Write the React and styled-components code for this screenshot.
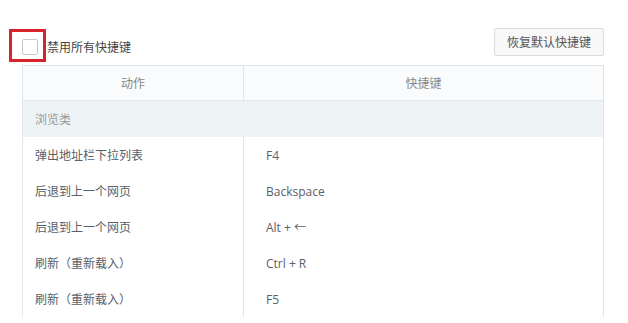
import styled, { createGlobalStyle } from 'styled-components'

const GlobalStyle = createGlobalStyle`
  body {
    margin: 0;
    background: #fff;
    font-family: 'Open Sans', 'Noto Sans CJK SC', sans-serif;
    font-size: 12px;
    color: #555a60;
  }
`

const Page = styled.div`
  padding: 28px 24px 0 22px;
`

const TopBar = styled.div`
  display: flex;
  align-items: center;
  justify-content: space-between;
  height: 28px;
  margin-bottom: 9px;
`

const CheckLabel = styled.label`
  display: flex;
  align-items: center;
  gap: 9px;
  margin-top: 10px;
  color: #444;
`

const Box = styled.span`
  position: relative;
  width: 14px;
  height: 14px;
  border: 1px solid #c9c9c9;
  border-radius: 2px;
  background: #fff;
`

const Highlight = styled.span`
  position: absolute;
  left: -14px;
  top: -11px;
  width: 31px;
  height: 27px;
  border: 3px solid #d8222c;
`

const Button = styled.button`
  height: 28px;
  padding: 0 12px;
  border: 1px solid #dcdcdc;
  border-radius: 2px;
  background: #f8f8f8;
  font-family: inherit;
  font-size: 12px;
  color: #555;
`

const Table = styled.table`
  width: 582px;
  border-collapse: collapse;
  border: 1px solid #e1e6ea;
  border-bottom: none;
`

const HeadCell = styled.th`
  height: 34px;
  padding: 0;
  font-weight: normal;
  color: #888;
  background: #f9fbfc;
  border-bottom: 1px solid #e1e6ea;
  border-right: 1px solid #e1e6ea;
  width: ${p => p.$w || 'auto'};
`

const GroupCell = styled.td`
  height: 36px;
  padding: 0 0 0 12px;
  background: #eef4f6;
  color: #999;
`

const Cell = styled.td`
  height: 36px;
  padding: 0 0 0 ${p => (p.$key ? '22px' : '12px')};
  border-right: 1px solid #e1e6ea;
  color: #5a6068;
`

const rows = [
  ['弹出地址栏下拉列表', 'F4'],
  ['后退到上一个网页', 'Backspace'],
  ['后退到上一个网页', 'Alt + ←'],
  ['刷新（重新载入）', 'Ctrl + R'],
  ['刷新（重新载入）', 'F5'],
]

export default function App() {
  return (
    <Page>
      <GlobalStyle />
      <TopBar>
        <CheckLabel>
          <Box>
            <Highlight />
          </Box>
          禁用所有快捷键
        </CheckLabel>
        <Button>恢复默认快捷键</Button>
      </TopBar>
      <Table>
        <thead>
          <tr>
            <HeadCell $w="220px">动作</HeadCell>
            <HeadCell>快捷键</HeadCell>
          </tr>
        </thead>
        <tbody>
          <tr>
            <GroupCell colSpan={2}>浏览类</GroupCell>
          </tr>
          {rows.map(([action, key], i) => (
            <tr key={i}>
              <Cell>{action}</Cell>
              <Cell $key>{key}</Cell>
            </tr>
          ))}
        </tbody>
      </Table>
    </Page>
  )
}
